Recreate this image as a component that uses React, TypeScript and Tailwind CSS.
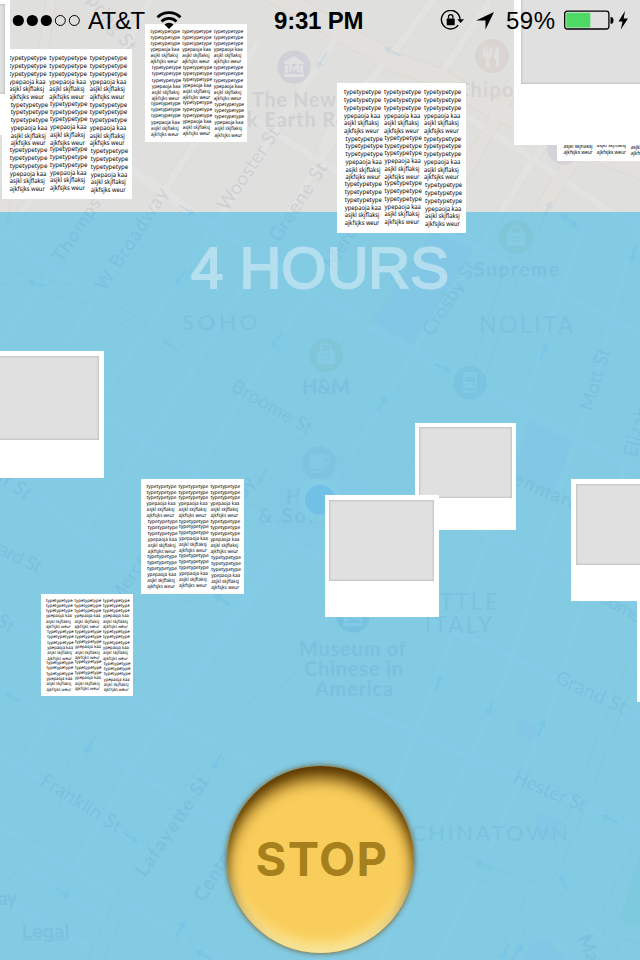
import React from "react";

type Point = [number, number];
type Road = { points: string; width?: number };

const streets: Road[] = [
  { points: "-10,226 5,235 53,268 97,297" },
  { points: "60,122 143,178 213,227 267,257 320,297 360,320 413,352 453,373 527,413 577,438 640,473", width: 10 },
  { points: "160,62 240,110 317,160 433,227 480,248 560,292 640,333" },
  { points: "320,150 345,105 386,62 440,-10" },
  { points: "213,227 147,330 103,393 60,460" },
  { points: "213,227 245,178 295,100 340,32" },
  { points: "260,257 197,363 150,436 80,536" },
  { points: "310,293 247,387 195,475" },
  { points: "260,257 290,212 320,160 385,60" },
  { points: "97,297 62,350 20,415" },
  { points: "53,268 3,343" },
  { points: "5,235 30,200 70,140 120,60 150,0" },
  { points: "97,297 143,224 200,135 260,40" },
  { points: "103,413 143,440 200,477 283,533 320,560 403,607 457,633 513,657 560,680 640,717", width: 8 },
  { points: "415,352 352,453 305,525 230,630 165,720" },
  { points: "413,352 480,248 520,180 580,90 620,20" },
  { points: "440,100 520,150 600,205 640,228" },
  { points: "440,76 490,0" },
  { points: "587,220 560,292 523,413 490,533 453,633 420,720 395,790" },
  { points: "640,218 610,323 583,420 563,480 540,563 513,657 487,720 440,823" },
  { points: "640,420 610,510 583,603 547,720 520,780 483,863 437,960" },
  { points: "430,505 487,533 540,560 577,580 640,610" },
  { points: "322,690 365,710 410,730 470,757 517,777 640,830", width: 9 },
  { points: "0,757 45,782 145,848" },
  { points: "0,827 30,843 77,873 123,900 180,937 230,965" },
  { points: "-5,683 50,717 93,743 130,770 187,803 230,830" },
  { points: "0,612 60,650 133,698 167,720 227,750 330,806" },
  { points: "183,690 130,770 73,870" },
  { points: "183,690 270,560" },
  { points: "50,717 22,765" },
  { points: "21,862 108,922" },
  { points: "0,480 45,500 80,536 190,610" },
  { points: "0,898 90,948", width: 10 },
  { points: "420,865 380,960" },
  { points: "557,862 575,910 620,960" },
  { points: "530,938 550,937 590,980" },
];

const avenues: Road[] = [
  { points: "270,-8 345,35 395,62 440,78 500,112 580,145 660,178", width: 18 },
  { points: "590,130 565,172 540,212 518,260 502,300 480,370 450,420 402,487 330,610 300,655 240,725 180,805 122,900 93,965", width: 13 },
  { points: "545,30 514,83 493,123 466,170 430,225 365,320 330,375 305,415 240,510 170,618 115,697 28,845 -8,890", width: 12 },
  { points: "-5,275 90,297 193,360 255,400 320,443 400,488", width: 13 },
  { points: "400,488 430,452 510,482 640,540", width: 12 },
  { points: "660,610 623,690 577,810 555,863 537,890 500,965", width: 12 },
  { points: "230,765 320,800 410,840 477,870 537,893 617,927 650,940", width: 15 },
  { points: "640,845 610,910 612,970", width: 11 },
  { points: "240,870 180,965", width: 11 },
  { points: "52,-5 44,48 10,165 0,240", width: 9 },
];

const arrows: [number, number, number][] = [
  [393, 52, 207], [322, 60, 122], [187, 210, 32], [37, 284, 194], [170, 345, 212],
  [181, 277, 122], [277, 340, 122], [547, 210, 300], [568, 219, 215], [570, 221, 40],
  [633, 254, 105], [443, 368, 27], [543, 352, 288], [382, 404, 300], [395, 272, 300],
  [263, 476, 122], [222, 600, 212], [13, 697, 212], [90, 745, 120], [217, 761, 122],
  [130, 837, 33], [62, 892, 33], [180, 930, 300], [204, 955, 212], [438, 683, 290],
  [491, 707, 112], [541, 729, 290], [610, 819, 202], [484, 865, 205], [564, 883, 248],
  [505, 952, 115], [517, 953, 305],
];

type LabelSpec = {
  text: string; x: number; y: number; w: number; size: number; angle?: number; bold?: boolean; tone?: string;
};

const labels: LabelSpec[] = [
  { text: "The New", x: 252, y: 107, w: 84, size: 20, bold: true },
  { text: "k Earth Rock", x: 247, y: 127, w: 122, size: 20, bold: true },
  { text: "Chipotle", x: 456, y: 97, w: 84, size: 20, bold: true, tone: "#a49a91" },
  { text: "Thompson St", x: 62, y: 264, w: 122, size: 19, angle: -57 },
  { text: "W Broadway", x: 105, y: 292, w: 118, size: 19, angle: -57 },
  { text: "Wooster St", x: 227, y: 212, w: 96, size: 19, angle: -56 },
  { text: "Greene St", x: 279, y: 243, w: 90, size: 19, angle: -57 },
  { text: "Mercer St", x: 333, y: 270, w: 86, size: 19, angle: -57 },
  { text: "Spring St", x: 80, y: -8, w: 78, size: 19, angle: 52 },
  { text: "SOHO", x: 182, y: 330, w: 75, size: 22, tone: "#8298a8" },
  { text: "H&M", x: 302, y: 394, w: 48, size: 20, bold: true },
  { text: "Supreme", x: 474, y: 276, w: 85, size: 19, bold: true },
  { text: "NOLITA", x: 479, y: 333, w: 94, size: 23, tone: "#8298a8" },
  { text: "Crosby St", x: 432, y: 337, w: 84, size: 19, angle: -57 },
  { text: "Mott St", x: 592, y: 412, w: 64, size: 19, angle: -73 },
  { text: "Elizabeth", x: 636, y: 458, w: 80, size: 19, angle: -75 },
  { text: "Broome St", x: 230, y: 390, w: 90, size: 19, angle: 30 },
  { text: "Canal St", x: -35, y: 455, w: 76, size: 19, angle: 37 },
  { text: "Howard St", x: -37, y: 536, w: 84, size: 19, angle: 27 },
  { text: "Lispenard St", x: -83, y: 571, w: 112, size: 19, angle: 34 },
  { text: "Broadway", x: 208, y: 556, w: 88, size: 19, angle: -57, bold: true },
  { text: "Mercer", x: 119, y: 605, w: 62, size: 19, angle: -57 },
  { text: "H", x: 286, y: 504, w: 14, size: 20, bold: true },
  { text: "& Sons", x: 258, y: 523, w: 72, size: 20, bold: true },
  { text: "Kenmare", x: 499, y: 478, w: 84, size: 19, angle: 23, bold: true },
  { text: "LITTLE", x: 417, y: 610, w: 81, size: 23, tone: "#8298a8" },
  { text: "ITALY", x: 425, y: 633, w: 67, size: 23, tone: "#8298a8" },
  { text: "Broome", x: 583, y: 593, w: 62, size: 19, angle: 29 },
  { text: "Museum of", x: 299, y: 656, w: 107, size: 20, bold: true },
  { text: "Chinese in", x: 304, y: 676, w: 99, size: 20, bold: true },
  { text: "America", x: 315, y: 696, w: 78, size: 20, bold: true },
  { text: "Grand St", x: 554, y: 682, w: 76, size: 19, angle: 25 },
  { text: "Hester St", x: 512, y: 782, w: 77, size: 19, angle: 23 },
  { text: "Franklin St", x: 39, y: 784, w: 92, size: 19, angle: 32 },
  { text: "Lafayette St", x: 145, y: 878, w: 116, size: 19, angle: -56, bold: true },
  { text: "Centre St", x: 204, y: 903, w: 84, size: 19, angle: -59, bold: true },
  { text: "CHINATOWN", x: 411, y: 841, w: 157, size: 22, tone: "#8298a8" },
  { text: "Manhattan", x: 577, y: 938, w: 98, size: 19, angle: 67, bold: true },
  { text: "ay", x: -2, y: 905, w: 19, size: 19, bold: true },
];

type PinKind = "museum" | "food" | "bag" | "train" | "cup" | "blank";

function Pin({ at, kind, fill }: { at: Point; kind: PinKind; fill: string }) {
  return (
    <g transform={`translate(${at[0]} ${at[1]})`}>
      <circle r="16.5" fill={fill} stroke="#8b8b98" strokeOpacity=".5" />
      <g fill="#fff" fillOpacity=".85" strokeOpacity=".85">
        {kind === "museum" && (
          <>
            <path d="M-10-5 0-11 10-5v2h-20zM-9-2h3v8h-3zM6-2h3v8H6zM-10 7h20v3h-20z" />
            <path d="M-4 5v-7L0 2.5 4-2v7" fill="none" stroke="#fff" strokeWidth="2.2" />
          </>
        )}
        {kind === "food" && (
          <>
            <path d="M-9-9h2v6h1.500v-6h2v6H-2v-6h2v8c0 2-1.500 3-3 3v9h-3V2c-1.500 0-3-1-3-3V-9z" />
            <path d="M7-9v20H4V3H2C2-4 4-8 7-9z" />
          </>
        )}
        {kind === "bag" && (
          <>
            <path d="M-9-4H9V7a2 2 0 0 1-2 2H-7a2 2 0 0 1-2-2z" />
            <path d="M-5-4v-2a5 5 0 0 1 10 0v2" fill="none" stroke="#fff" strokeWidth="2" />
            <path d="M-5 0h10M-3 4h6" stroke={fill} strokeWidth="2" strokeDasharray="2 1.500" />
          </>
        )}
        {kind === "train" && (
          <>
            <path fillRule="evenodd" d="M-4-11h8q3 0 3 3V3q0 2-2 2H-5q-2 0-2-2V-8q0-3 3-3zM-5-6v5H5v-5zM-3-9v1h6v-1zM-5 1v2h2V1zM3 1v2h2V1z" />
            <path d="M-4 6-7 11M4 6 7 11M-5 8.500H5" stroke="#fff" strokeWidth="1.800" />
          </>
        )}
        {kind === "cup" && (
          <>
            <path d="M-9-9H6V2q0 4-4 4h-7q-4 0-4-4z" />
            <path d="M6-6h2q3 0 3 3t-5 4M-8 9H5" fill="none" stroke="#fff" strokeWidth="1.800" />
          </>
        )}
      </g>
    </g>
  );
}

function CityMap() {
  return (
    <svg className="absolute inset-0" width="640" height="960" viewBox="0 0 640 960">
      <rect width="640" height="960" fill="#ebe8e3" />
      <g fill="#e6c6fa">
        <path d="M432 228 475 248 412 345 366 320z" />
        <path d="M530 418 573 440 551 496 512 478z" />
        <path d="M520 720 537 728 531 741 515 733zM540 811 564 823 552 842 533 832z" />
        <path d="M530 945 550 942 562 960H522z" />
      </g>
      <path d="M640 840 632 880 617 925 640 935z" fill="#a5dfa0" />
      <g fill="none" strokeLinejoin="round">
        {streets.map((r) => (
          <polyline key={r.points} points={r.points} stroke="#d5d3d0" strokeWidth={(r.width ?? 7) + 1.5} />
        ))}
        {avenues.map((r) => (
          <polyline key={r.points} points={r.points} stroke="#edb970" strokeWidth={(r.width ?? 12) + 2} strokeOpacity=".9" />
        ))}
        {streets.map((r) => (
          <polyline key={r.points} points={r.points} stroke="#ffffff" strokeWidth={r.width ?? 7} />
        ))}
        {avenues.map((r) => (
          <polyline key={r.points} points={r.points} stroke="#f3f0e0" strokeWidth={r.width ?? 12} />
        ))}
      </g>
      {arrows.map(([x, y, a]) => (
        <path key={`${x}-${y}`} d="M-9-1.200H3V-4.500L10 0 3 4.500V1.200H-9z" fill="#5bb8ee" fillOpacity=".8" transform={`translate(${x} ${y}) rotate(${a})`} />
      ))}
      <g fontFamily="Lato, 'Open Sans', sans-serif">
        {labels.map((l) => (
          <text
            key={l.text + l.x}
            fontSize={l.size}
            fontWeight={l.bold ? 700 : 400}
            fill={l.tone ?? "#8484a0"}
            textLength={l.w}
            transform={`translate(${l.x} ${l.y}) rotate(${l.angle ?? 0})`}
          >
            {l.text}
          </text>
        ))}
      </g>
      <Pin at={[294, 67]} kind="museum" fill="#8490c4" />
      <Pin at={[492, 56]} kind="food" fill="#c8a794" />
      <Pin at={[564, 148]} kind="blank" fill="#a99ac9" />
      <Pin at={[516, 237]} kind="bag" fill="#c4b25e" />
      <Pin at={[326, 355]} kind="bag" fill="#c4b25e" />
      <Pin at={[470, 383]} kind="train" fill="#7a9bc6" />
      <Pin at={[319, 463]} kind="cup" fill="#aaa6a2" />
      <Pin at={[353, 616]} kind="museum" fill="#5c86bd" />
      <circle cx="319" cy="500" r="50" fill="#4aa5ee" fillOpacity=".08" />
      <circle cx="320" cy="500" r="22" fill="#fff" fillOpacity=".8" />
      <circle cx="320" cy="500" r="15" fill="#0a84ff" />
    </svg>
  );
}

const rows = ["typetypetype", "typetypetype", "typetypetype", "ypepaoja kaa", "asjkl skjflaksj", "ajkfsjks weur"];
const rowWidths = [37.3, 37.3, 37.3, 36.3, 34.8, 34.8];
const blocks: Point[] = [
  [7, 11.2], [47, 11.2], [87, 11.2],
  [8.6, 57.6], [47.6, 56.8], [87, 57.6],
  [7.7, 103.2], [47.6, 102.2], [88, 104.2],
];

// Sheet of three typed columns, laid out on a 129x150 page.
function TypedSheet({ className }: { className: string }) {
  return (
    <svg className={`absolute bg-white ${className}`} viewBox="0 0 129 150" preserveAspectRatio="none">
      <g fontFamily="'Noto Sans', 'Open Sans', sans-serif" fontSize="6.500" fill="#000" textRendering="geometricPrecision">
        {blocks.map(([x, y]) =>
          rows.map((row, i) => (
            <text key={`${x}-${y}-${i}`} x={x} y={y + i * 7.77} textLength={rowWidths[i]} lengthAdjust="spacingAndGlyphs">
              {row}
            </text>
          )),
        )}
      </g>
    </svg>
  );
}

function Polaroid({ className, photo }: { className: string; photo: string }) {
  return (
    <div className={`absolute flex flex-col bg-white ${className}`}>
      <div className={`bg-[#e0e0e0] shadow-[inset_0_0_2px_1px_#c2c2c2] ${photo}`} />
    </div>
  );
}

function StatusBar() {
  return (
    <header className="relative flex h-[42px] w-full items-center font-['Liberation_Sans',Arial,sans-serif] text-black">
      <svg className="ml-3 shrink-0" width="69" height="14" viewBox="0 0 69 14">
        {[0, 1, 2, 3, 4].map((i) => (
          <circle key={i} cx={6.3 + i * 14} cy="6.500" r={i < 3 ? 5.6 : 5} fill={i < 3 ? "#000" : "none"} stroke={i < 3 ? "none" : "#000"} strokeWidth="1" />
        ))}
      </svg>
      <span className="ml-[7px] w-[59px] whitespace-nowrap text-[24px] leading-10 tracking-[-0.8px]">AT&amp;T</span>
      <svg className="ml-[9px] shrink-0" width="26" height="20" viewBox="0 0 26 20">
        <g fill="none" stroke="#000" strokeWidth="2.800">
          <path d="M1.500 6.200a16.500 16.500 0 0 1 23 0" />
          <path d="M5.500 10.500a10.700 10.700 0 0 1 15 0" />
        </g>
        <path d="M8.400 13.500a6.700 6.700 0 0 1 9.200 0L13 18z" />
      </svg>
      <span className="ml-[92px] w-[92px] whitespace-nowrap text-[24px] leading-10 font-bold tracking-[-0.2px]">9:31 PM</span>
      <svg className="ml-[74px] shrink-0" width="25" height="22" viewBox="0 0 25 22">
        <path d="M18.200 15.200A9.300 9.300 0 1 1 20 9.500" fill="none" stroke="#000" strokeWidth="1.400" />
        <path d="M17.200 9.200H24l-3.400 3.800z" />
        <rect x="6.700" y="8.600" width="8" height="6.600" rx=".6" />
        <path d="M8.500 8.600V6.800a2.200 2.200 0 0 1 4.400 0V8.600" fill="none" stroke="#000" strokeWidth="1.300" />
      </svg>
      <svg className="ml-[11px] shrink-0" width="18" height="18" viewBox="0 0 18 18">
        <path d="M18 0 9.500 17.500V8.500H0z" />
      </svg>
      <span className="ml-3 w-[52px] whitespace-nowrap text-[24px] leading-10 tracking-[0.5px]">59%</span>
      <svg className="ml-[6px] shrink-0" width="66" height="22" viewBox="0 0 66 22">
        <rect x=".7" y="1.200" width="44.200" height="17.800" rx="2.500" fill="none" stroke="#000" strokeWidth="1.300" />
        <rect x="2.300" y="2.800" width="24" height="14.600" rx="1" fill="#4cd964" />
        <path d="M46.500 7q3 0 3 3.400t-3 3.400z" />
        <path d="M61 1 54.500 11.500h4L56.800 19.500 64 8.500h-4.300z" />
      </svg>
    </header>
  );
}

export default function App() {
  return (
    <main className="relative flex h-[960px] w-[640px] flex-col items-center overflow-hidden bg-[#dfdfdd] font-['Liberation_Sans',Arial,sans-serif]">
      <CityMap />
      <span className="absolute top-[921px] left-[22px] font-['Inter',sans-serif] text-[18px] leading-[22px] font-semibold text-[#8484a0] underline">Legal</span>
      <div className="absolute inset-x-0 top-0 h-[212px] bg-[#dddddc]/85" />
      <div className="absolute inset-x-0 top-[212px] bottom-0 bg-[#7ac7e3]/92" />

      <TypedSheet className="top-[49px] left-[2px] h-[150px] w-[130px]" />
      <TypedSheet className="top-[24px] left-[145px] h-[118px] w-[102px]" />
      <TypedSheet className="top-[83px] left-[337px] h-[150px] w-[129px]" />
      <TypedSheet className="top-[36px] left-[557px] h-[125px] w-[108px]" />
      <TypedSheet className="top-[479px] left-[141px] h-[115px] w-[103px]" />
      <TypedSheet className="top-[594px] left-[41px] h-[102px] w-[92px]" />

      <Polaroid className="top-[-1px] left-[-116px] h-[136px] w-[126px] px-[5px] pt-[5px]" photo="h-[90px]" />
      <Polaroid className="top-[-40px] left-[514px] h-[185px] w-[170px] px-[7px] pt-[7px]" photo="h-[117px]" />
      <Polaroid className="top-[351px] left-[-14px] h-[127px] w-[118px] px-[5px] pt-[5px]" photo="h-[84px]" />
      <Polaroid className="top-[423px] left-[415px] h-[107px] w-[101px] px-1 pt-1" photo="h-[71px]" />
      <Polaroid className="top-[495px] left-[325px] h-[122px] w-[114px] pt-[5px] pr-[5px] pl-1" photo="h-[81px]" />
      <Polaroid className="top-[590px] left-[637px] h-[112px] w-[104px] px-[5px] pt-[5px]" photo="h-[75px]" />
      <Polaroid className="top-[479px] left-[571px] h-[122px] w-[114px] px-[5px] pt-[5px]" photo="h-[81px]" />

      <StatusBar />
      <h1 className="relative mt-[192px] text-[58px] leading-[68px] whitespace-nowrap text-white opacity-40 [-webkit-text-stroke:2px_white]">4 HOURS</h1>
      <button className="relative mt-[464px] flex h-[187px] w-[187px] items-center justify-center rounded-full bg-[#f9cd5b] shadow-[0_0_5px_1px_#6b5620cc,inset_0_14px_16px_-2px_#5a3800,inset_0_-12px_14px_-4px_#fff3ae,inset_0_0_8px_1px_#9a6c16]">
        <span className="pb-[3px] pl-[4px] font-['Inter',sans-serif] text-[47px] leading-none font-bold tracking-[1.4px] text-[#a5801c]">STOP</span>
      </button>
    </main>
  );
}
